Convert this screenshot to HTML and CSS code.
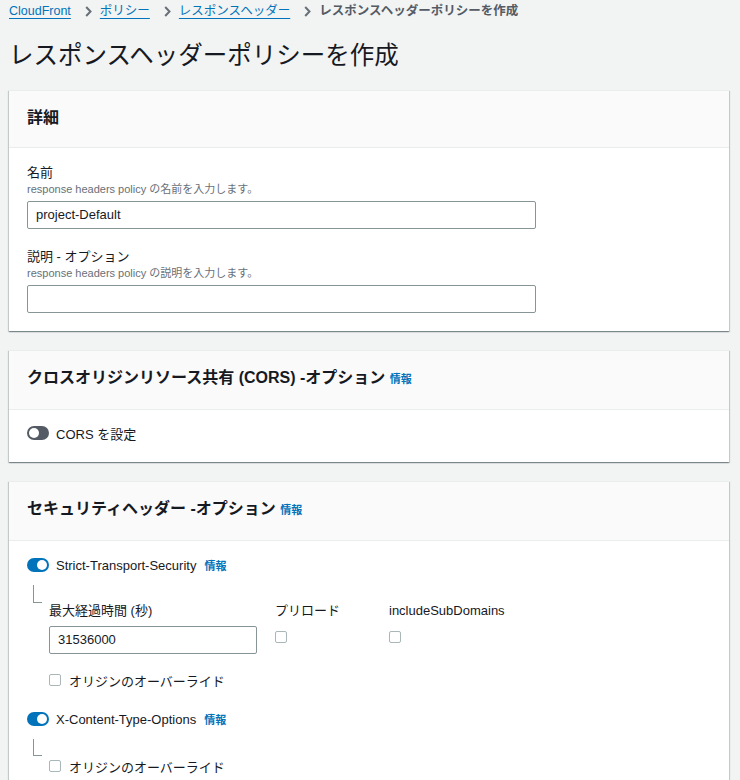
FILE: index.html
```html
<!DOCTYPE html>
<html lang="ja">
<head>
<meta charset="utf-8">
<title>レスポンスヘッダーポリシーを作成</title>
<link rel="stylesheet" href="styles.css">
</head>
<body>
<div class="page">
  <nav class="breadcrumb">
    <a class="crumb-link" href="#">CloudFront</a>
    <svg class="chev" width="7" height="11" viewBox="0 0 7 11"><path d="M1.2 1 L5.5 5.5 L1.2 10" fill="none" stroke="#687078" stroke-width="2"/></svg>
    <a class="crumb-link" href="#">ポリシー</a>
    <svg class="chev" width="7" height="11" viewBox="0 0 7 11"><path d="M1.2 1 L5.5 5.5 L1.2 10" fill="none" stroke="#687078" stroke-width="2"/></svg>
    <a class="crumb-link" href="#">レスポンスヘッダー</a>
    <svg class="chev" width="7" height="11" viewBox="0 0 7 11"><path d="M1.2 1 L5.5 5.5 L1.2 10" fill="none" stroke="#687078" stroke-width="2"/></svg>
    <span class="crumb-current">レスポンスヘッダーポリシーを作成</span>
  </nav>

  <h1 class="page-title">レスポンスヘッダーポリシーを作成</h1>

  <section class="card">
    <div class="card-header card-header-short">
      <h2 class="card-title">詳細</h2>
    </div>
    <div class="card-body details-body">
      <div class="field">
        <div class="label">名前</div>
        <div class="desc">response headers policy の名前を入力します。</div>
        <div class="input wide">project-Default</div>
      </div>
      <div class="field field-next">
        <div class="label">説明 - オプション</div>
        <div class="desc">response headers policy の説明を入力します。</div>
        <div class="input wide"></div>
      </div>
    </div>
  </section>

  <section class="card">
    <div class="card-header">
      <h2 class="card-title">クロスオリジンリソース共有 (CORS) -オプション <a class="info" href="#">情報</a></h2>
    </div>
    <div class="card-body toggle-body">
      <div class="toggle-row">
        <span class="toggle"></span>
        <span class="toggle-label">CORS を設定</span>
      </div>
    </div>
  </section>

  <section class="card">
    <div class="card-header">
      <h2 class="card-title">セキュリティヘッダー -オプション <a class="info" href="#">情報</a></h2>
    </div>
    <div class="card-body security-body">
      <div class="toggle-row">
        <span class="toggle on"></span>
        <span class="toggle-label">Strict-Transport-Security</span>
        <a class="info info-inline" href="#">情報</a>
      </div>
      <div class="tree-line"></div>
      <div class="indent">
        <div class="hsts-fields">
          <div class="col-age">
            <div class="label">最大経過時間 (秒)</div>
            <div class="input age">31536000</div>
          </div>
          <div class="col-preload">
            <div class="label">プリロード</div>
            <span class="checkbox col-check"></span>
          </div>
          <div class="col-sub">
            <div class="label">includeSubDomains</div>
            <span class="checkbox col-check"></span>
          </div>
        </div>
        <div class="check-row override-first">
          <span class="checkbox"></span>
          <span class="check-label">オリジンのオーバーライド</span>
        </div>
      </div>

      <div class="toggle-row toggle-next">
        <span class="toggle on"></span>
        <span class="toggle-label">X-Content-Type-Options</span>
        <a class="info info-inline" href="#">情報</a>
      </div>
      <div class="tree-line tree-line-second"></div>
      <div class="indent">
        <div class="check-row">
          <span class="checkbox"></span>
          <span class="check-label">オリジンのオーバーライド</span>
        </div>
      </div>
    </div>
  </section>
</div>
</body>
</html>
```

FILE: styles.css
```css
* {
  box-sizing: border-box;
}

html, body {
  margin: 0;
  padding: 0;
  background: #f2f3f3;
}

body {
  font-family: "Liberation Sans", "Noto Sans CJK JP", sans-serif;
  color: #16191f;
  font-size: 13px;
}

.page {
  width: 740px;
  height: 780px;
  overflow: hidden;
  padding: 0 11px 0 9px;
}

/* breadcrumb */
.breadcrumb {
  display: flex;
  align-items: center;
  height: 20px;
  margin-top: 1px;
  font-size: 12.5px;
  line-height: 20px;
  white-space: nowrap;
}

.crumb-link {
  color: #0073bb;
  text-decoration: underline;
  text-underline-offset: 3px;
}

.chev {
  margin: 0 8px 0 14px;
  flex: none;
}

.crumb-current {
  color: #545b64;
  font-weight: bold;
}

.page-title {
  margin: 19px 0 0 0;
  font-size: 24.5px;
  line-height: 32px;
  font-weight: normal;
  color: #16191f;
}

/* cards */
.card {
  background: #ffffff;
  margin-top: 19px;
  border-top: 1px solid #eaeded;
  box-shadow: 0 1px 1px 0 rgba(0, 28, 36, 0.3), 1px 1px 1px 0 rgba(0, 28, 36, 0.15), -1px 1px 1px 0 rgba(0, 28, 36, 0.15);
}

.page-title + .card {
  margin-top: 18px;
}

.card-header {
  height: 59px;
  background: #fafafa;
  border-bottom: 1px solid #eaeded;
  padding: 17px 18px 0 18px;
}

.card-header-short {
  height: 57px;
  padding-top: 17px;
}

.card-title {
  margin: 0;
  font-size: 16px;
  line-height: 20px;
  font-weight: bold;
  color: #16191f;
}

.info {
  color: #0073bb;
  font-size: 11px;
  font-weight: bold;
  text-decoration: none;
}

.card-body {
  padding: 0 18px;
}

/* details */
.details-body {
  padding-top: 17px;
  padding-bottom: 18px;
}

.label {
  font-size: 13px;
  line-height: 16px;
  color: #16191f;
  white-space: nowrap;
}

.desc {
  font-size: 11px;
  line-height: 16px;
  color: #687078;
}

.input {
  height: 28px;
  border: 1px solid #879596;
  border-radius: 2px;
  background: #ffffff;
  font-size: 13px;
  line-height: 26px;
  padding: 0 8px;
  color: #16191f;
}

.wide {
  width: 509px;
  margin-top: 4px;
}

.field-next {
  margin-top: 20px;
}

/* toggles */
.toggle-body {
  padding-top: 13px;
  padding-bottom: 19px;
}

.toggle-row {
  display: flex;
  align-items: center;
  height: 20px;
}

.toggle {
  position: relative;
  flex: none;
  width: 22px;
  height: 14px;
  border-radius: 7px;
  background: #545b64;
}

.toggle::after {
  content: "";
  position: absolute;
  top: 2px;
  left: 2px;
  width: 10px;
  height: 10px;
  border-radius: 50%;
  background: #ffffff;
}

.toggle.on {
  background: #0073bb;
}

.toggle.on::after {
  left: 10px;
}

.toggle-label {
  margin-left: 7px;
  font-size: 13px;
  color: #16191f;
}

.info-inline {
  margin-left: 8px;
}

/* security */
.security-body {
  padding-top: 14px;
  padding-bottom: 20px;
}

.tree-line {
  width: 9px;
  height: 18px;
  margin: 10px 0 0 6px;
  border-left: 1px solid #879596;
  border-bottom: 1px solid #879596;
}

.tree-line-second {
  height: 17px;
  margin-top: 10px;
}

.indent {
  padding-left: 22px;
}

.hsts-fields {
  display: flex;
  gap: 18px;
}

.col-age {
  width: 208px;
}

.age {
  margin-top: 7px;
}

.col-preload {
  width: 96px;
}

.checkbox {
  display: block;
  flex: none;
  width: 12px;
  height: 12px;
  border: 1px solid #aab7b8;
  border-radius: 2px;
  background: #ffffff;
}

.col-check {
  margin-top: 12px;
}

.check-row {
  display: flex;
  align-items: center;
  height: 20px;
}

.override-first {
  margin-top: 16px;
}

.check-label {
  margin-left: 8px;
  font-size: 13px;
  color: #16191f;
}

.toggle-next {
  margin-top: 19px;
}
```
